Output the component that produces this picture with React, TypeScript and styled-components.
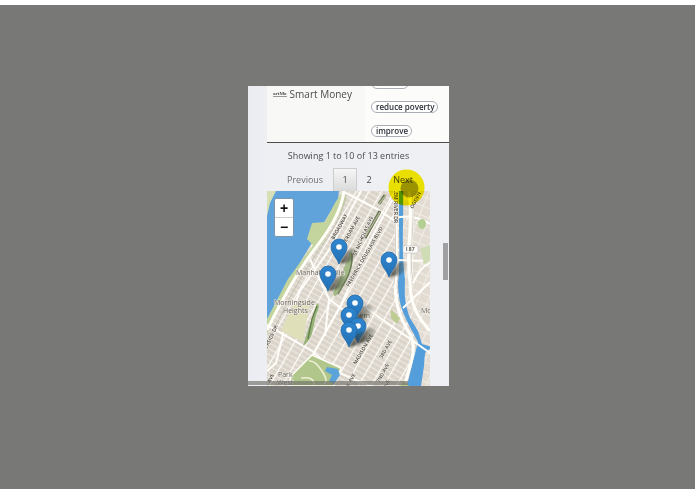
import React from "react";
import styled, { createGlobalStyle } from "styled-components";

const GlobalStyle = createGlobalStyle`
  * { box-sizing: border-box; }
  body { margin: 0; background: #fff; font-family: "Open Sans", "Noto Sans", sans-serif; color: #4b4b4d; }
`;

const Page = styled.div`
  display: flex;
  min-height: 100vh;
  padding: 5px 0;
`;

const Backdrop = styled.main`
  flex: 1;
  display: flex;
  align-items: center;
  justify-content: center;
  padding: 0 0 22px 2px;
  background: #787876;
`;

const Screen = styled.section`
  position: relative;
  width: 201px;
  max-width: 100%;
  padding-left: 19px;
  overflow: hidden;
  background: linear-gradient(90deg, #eaecf2, #eeeff3 20px, #eff0f4);
`;

const Results = styled.table`
  width: 100%;
  border-collapse: collapse;
  background: #f9f9f8;
  border-bottom: 1px solid #4c4c4a;
`;

const NameCell = styled.td`
  width: 98px;
  padding: 0 0 0 6px;
  vertical-align: top;
  background: #f8f8f7;
`;

const TagCell = styled.td`
  padding: 0 0 5px 6px;
  vertical-align: top;
  background: #fcfcfb;
`;

const Org = styled.div`
  display: flex;
  align-items: center;
  gap: 3px;
  height: 16px;
  font-size: 10px;
  white-space: nowrap;
`;

const Logo = styled.span`
  font: bold 5px/5px "Liberation Serif", serif;
  border-bottom: 1px solid #999;
`;

const TagList = styled.ul`
  display: flex;
  flex-direction: column;
  align-items: flex-start;
  gap: 12px;
  height: 51px;
  justify-content: flex-end;
  margin: 0;
  padding: 0;
  overflow: hidden;
  list-style: none;
`;

const Tag = styled.li`
  flex: none;
  height: 12px;
  min-width: 38px;
  padding: 0 3px 0 4px;
  border: 1px solid #a9adb5;
  border-radius: 6px;
  background: #fff;
  color: #2c2f38;
  font-size: 8px;
  font-weight: 600;
  line-height: 10px;
  white-space: nowrap;
`;

const Summary = styled.p`
  margin: 0;
  padding: 5px 19px 0 0;
  height: 25px;
  font-size: 9px;
  line-height: 16px;
  text-align: center;
  white-space: nowrap;
`;

const Pager = styled.nav`
  display: flex;
  height: 23px;
  margin: 0 19px 0 12px;
`;

const PageButton = styled.button<{ $current?: boolean; $muted?: boolean }>`
  height: 24px;
  min-width: 24px;
  padding: 0 7px;
  border: 1px solid ${(p) => (p.$current ? "#cdcdd0" : "transparent")};
  background: ${(p) => (p.$current ? "linear-gradient(#f6f6f7, #dadadb)" : "none")};
  color: ${(p) => (p.$muted ? "#6e6e73" : "#45454a")};
  font: 9px/20px "Open Sans", "Noto Sans", sans-serif;
  &:first-child { margin-right: 2px; }
  &:last-child { margin-left: 4px; }
`;

const MapArea = styled.div`
  position: relative;
  margin-right: 19px;
  height: 195px;
  overflow: hidden;
`;

const MapDrawing = styled.svg`
  display: block;
  width: 100%;
  height: 100%;
`;

const Zoom = styled.div`
  position: absolute;
  top: 7px;
  left: 7px;
  display: flex;
  flex-direction: column;
  width: 20px;
  border: 1px solid #8095a5;
  border-radius: 3px;
  overflow: hidden;
  background: #fff;
`;

const ZoomButton = styled.button`
  height: 18px;
  padding: 0;
  border: 0;
  background: #fff;
  color: #111;
  font: bold 14px/18px "Liberation Sans", sans-serif;
  & + & { height: 19px; border-top: 1px solid #ccc; }
`;

const VerticalThumb = styled.div`
  position: absolute;
  right: 1px;
  top: 157px;
  width: 5px;
  height: 37px;
  background: #a0a0a2;
`;

const HorizontalThumb = styled.div`
  position: absolute;
  left: 0;
  bottom: 1px;
  width: 160px;
  height: 4px;
  background: rgba(110, 110, 105, 0.65);
`;

const Pointer = styled.svg`
  position: absolute;
  left: 140px;
  top: 83px;
  width: 37px;
  height: 37px;
  mix-blend-mode: multiply;
  pointer-events: none;
`;

const MapText = styled.text`
  fill: #67625c;
  font-family: "Open Sans", sans-serif;
  font-size: 7px;
  paint-order: stroke;
  stroke: #f4f1ea;
  stroke-width: 1px;
`;

const StreetText = styled(MapText)`
  fill: #45403a;
  font-size: 5px;
  font-weight: 600;
`;

const pins: [number, number][] = [
  [72, 73], [61, 100], [122, 86], [88, 129], [82, 141], [91, 152], [82, 156],
];

const streets: [string, number, number, number][] = [
  ["BROADWAY", 67, 49, -61],
  ["AMSTERDAM AVE", 73, 63, -61],
  ["ST NICHOLAS AVE", 89, 65, -66],
  ["FREDERICK DOUGLASS BLVD", 82, 96, -60],
  ["MADISON AVE", 89, 174, -60],
  ["3RD AVE", 115, 168, -60],
  ["2ND AVE", 112, 192, -60],
  ["PARK AVE", 77, 204, -60],
  ["RIVERSIDE DR", -3, 165, -65],
  ["AVE", 3, 192, -62],
  ["AVE", 119, 198, -62],
];

function Pin({ x, y }: { x: number; y: number }) {
  return (
    <g transform={`translate(${x} ${y})`}>
      <path d="M0 0L7-12Q13-18 17-14Q20-8 10-2Z" fill="url(#shade)" filter="url(#soft)" />
      <path d="M0 0C-2-6-8-11-8-17A8 8 0 0 1 8-17C8-11 2-6 0 0Z" fill="url(#pin)" stroke="#2469a5" strokeWidth=".8" />
      <circle cy="-17" r="2.8" fill="#fff" />
    </g>
  );
}

function CityMap() {
  return (
    <MapDrawing viewBox="0 0 163 195" preserveAspectRatio="xMidYMid slice" role="img" aria-label="Map of northern Manhattan">
      <defs>
        <pattern id="blocks" width="11" height="5" patternUnits="userSpaceOnUse" patternTransform="rotate(30)">
          <rect width="11" height="5" fill="#e0d9d0" />
          <path d="M4 0V5M8 0V5M0 3H11" stroke="#d3cbc1" strokeWidth=".6" />
          <path d="M0 0H11" stroke="#f5f1ea" strokeWidth="1.3" />
          <path d="M0 0V5" stroke="#fffefa" strokeWidth="2.2" />
        </pattern>
        <pattern id="bronx" width="10" height="9" patternUnits="userSpaceOnUse" patternTransform="rotate(22)">
          <rect width="10" height="9" fill="#e2dcd3" />
          <path d="M0 0V9M0 0H10" stroke="#f6f3ec" strokeWidth="1.6" />
        </pattern>
        <linearGradient id="pin" x2="0" y2="1">
          <stop stopColor="#2f86d0" /><stop offset="1" stopColor="#2270b4" />
        </linearGradient>
        <linearGradient id="shade">
          <stop stopColor="#27291f" stopOpacity=".9" /><stop offset="1" stopColor="#44453c" stopOpacity=".15" />
        </linearGradient>
        <filter id="soft" x="-30%" y="-30%" width="160%" height="160%"><feGaussianBlur stdDeviation="1" /></filter>
      </defs>
      <rect width="163" height="195" fill="url(#blocks)" />
      <path d="M133 0H163V195H153L160 160L137 109Z" fill="url(#bronx)" />

      <path d="M0 0H72L71 8L46 50L22 90L0 134Z" fill="#60a3da" />
      <path d="M0 0H9L3 12L0 25Z" fill="#d7dfb4" />
      <path d="M68 12L74 3L79 7L73 22L56 51L38 72L20 101L0 143V128L21 88L46 54L40 48L45 32L58 31Z" fill="#c3d59d" />
      <path d="M77 0C74 22 61 41 47 59S20 99 0 139" fill="none" stroke="#fffef8" strokeWidth="3" />
      <path d="M80 0C76 25 64 42 50 62S24 102 5 143" fill="none" stroke="#b8b4a4" strokeWidth=".7" />
      <path d="M0 180L9 172L16 143L33 100L62 59L94 0M31 195L48 160L74 114L103 50L125 9M0 134L45 160L70 181L103 195M43 68L62 108L100 136M62 108L58 145M75 0L110 18L135 35" fill="none" stroke="#fffefa" strokeWidth="2" />

      <path d="M26 114L43 110L36 151L14 140Z" fill="#dfdfba" />
      <path d="M50 112Q54 113 49 124L45 143Q42 151 36 155L41 139Z" fill="#98b377" />
      <path d="M50 115L45 128L41 148" stroke="#5f7a4c" strokeWidth="1.2" fill="none" />
      <path d="M84 59Q88 70 80 87L70 104Q67 107 66 102L75 82Z" fill="#a4b988" />
      <path d="M85 62Q86 76 79 89L71 103" stroke="#6a7b55" strokeWidth="1.5" fill="none" />
      <path d="M118 4L112 13M113 20L98 47" stroke="#696f58" strokeWidth="3" fill="none" />
      <path d="M119 4L112 13M113 21L98 46" stroke="#aebb90" strokeWidth="1.4" fill="none" />

      <path d="M45 164L74 177L67 195H22L24 185Z" fill="#b0c68a" stroke="#fffef5" strokeWidth="1.5" />
      <path d="M34 187Q48 185 47 195M42 170Q48 169 55 180T57 193" fill="none" stroke="#eff0d5" strokeWidth="1.5" />
      <path d="M60 176L71 178L73 184L67 193L62 190L65 184L58 180Z" fill="#5ba4d9" />

      <path d="M132 0C131 30 134 65 131 92C131 113 137 124 143 136L151 151L145 174L140 195H154L157 175L158 162L165 156L155 153L151 140L143 127C136 109 138 98 138 88C134 61 137 25 136 0Z" fill="#549edb" />
      <path d="M128 0C129 34 131 66 128 94C129 116 133 126 141 140C154 158 139 181 138 195M142 0C147 31 138 63 143 91C143 116 153 129 163 140" fill="none" stroke="#fffef9" strokeWidth="3" />
      <path d="M145 0C149 30 141 65 146 90M146 92Q153 76 163 72M136 117L163 91M99 117L163 162M128 27Q145 22 163 33M128 69L163 70" fill="none" stroke="#fffefa" strokeWidth="2" />
      <path d="M145 0C149 30 141 65 146 90M127 0C128 34 130 66 127 94" fill="none" stroke="#b5b0a8" strokeWidth=".6" />
      <path d="M124 118L133 127L130 133L124 127Z" fill="#bdcc91" />
      <ellipse cx="155" cy="33" rx="4" ry="5" fill="#b3cf91" />
      <path d="M153 58L163 54V70L157 73Z" fill="#d0dcb4" />
      <path d="M137 190L133 195H142Z" fill="#b8c98c" />

      {streets.map(([name, x, y, angle], i) => (
        <StreetText key={i} transform={`translate(${x} ${y}) rotate(${angle})`}>{name}</StreetText>
      ))}
      <StreetText textAnchor="end" transform="translate(127 32) rotate(90)">HARLEM RIVER DR</StreetText>
      <StreetText transform="translate(146 18) rotate(-62)">OGDEN</StreetText>
      <MapText x="29" y="84">Manhattanville</MapText>
      <MapText x="7" y="114">Morningside</MapText>
      <MapText x="16" y="122">Heights</MapText>
      <MapText x="79" y="127">Harlem</MapText>
      <MapText x="11" y="186">Park</MapText>
      <MapText x="10" y="194">West</MapText>
      <MapText x="154" y="122">Mott Haven</MapText>
      <rect x="136" y="55" width="15" height="7" rx="1" fill="#fff" stroke="#aaa" strokeWidth=".5" />
      <StreetText x="139" y="60">I 87</StreetText>
      {pins.map(([x, y], i) => <Pin key={i} x={x} y={y} />)}
    </MapDrawing>
  );
}

export default function App() {
  return (
    <Page>
      <GlobalStyle />
      <Backdrop>
        <Screen>
          <Results>
            <tbody>
              <tr>
                <NameCell><Org><Logo>artMo</Logo>Smart Money</Org></NameCell>
                <TagCell>
                  <TagList>
                    <Tag />
                    <Tag>reduce poverty</Tag>
                    <Tag>improve</Tag>
                  </TagList>
                </TagCell>
              </tr>
            </tbody>
          </Results>
          <Summary>Showing 1 to 10 of 13 entries</Summary>
          <Pager aria-label="Result pages">
            <PageButton $muted>Previous</PageButton>
            <PageButton $current aria-current="page">1</PageButton>
            <PageButton>2</PageButton>
            <PageButton>Next</PageButton>
          </Pager>
          <MapArea>
            <CityMap />
            <Zoom>
              <ZoomButton aria-label="Zoom in">+</ZoomButton>
              <ZoomButton aria-label="Zoom out">−</ZoomButton>
            </Zoom>
          </MapArea>
          <VerticalThumb />
          <HorizontalThumb />
          <Pointer viewBox="0 0 37 37" aria-hidden="true">
            <circle cx="18.5" cy="18.5" r="18" fill="#f9ed00" />
            <circle cx="21.5" cy="19.5" r="9" fill="#a59c00" />
          </Pointer>
        </Screen>
      </Backdrop>
    </Page>
  );
}
